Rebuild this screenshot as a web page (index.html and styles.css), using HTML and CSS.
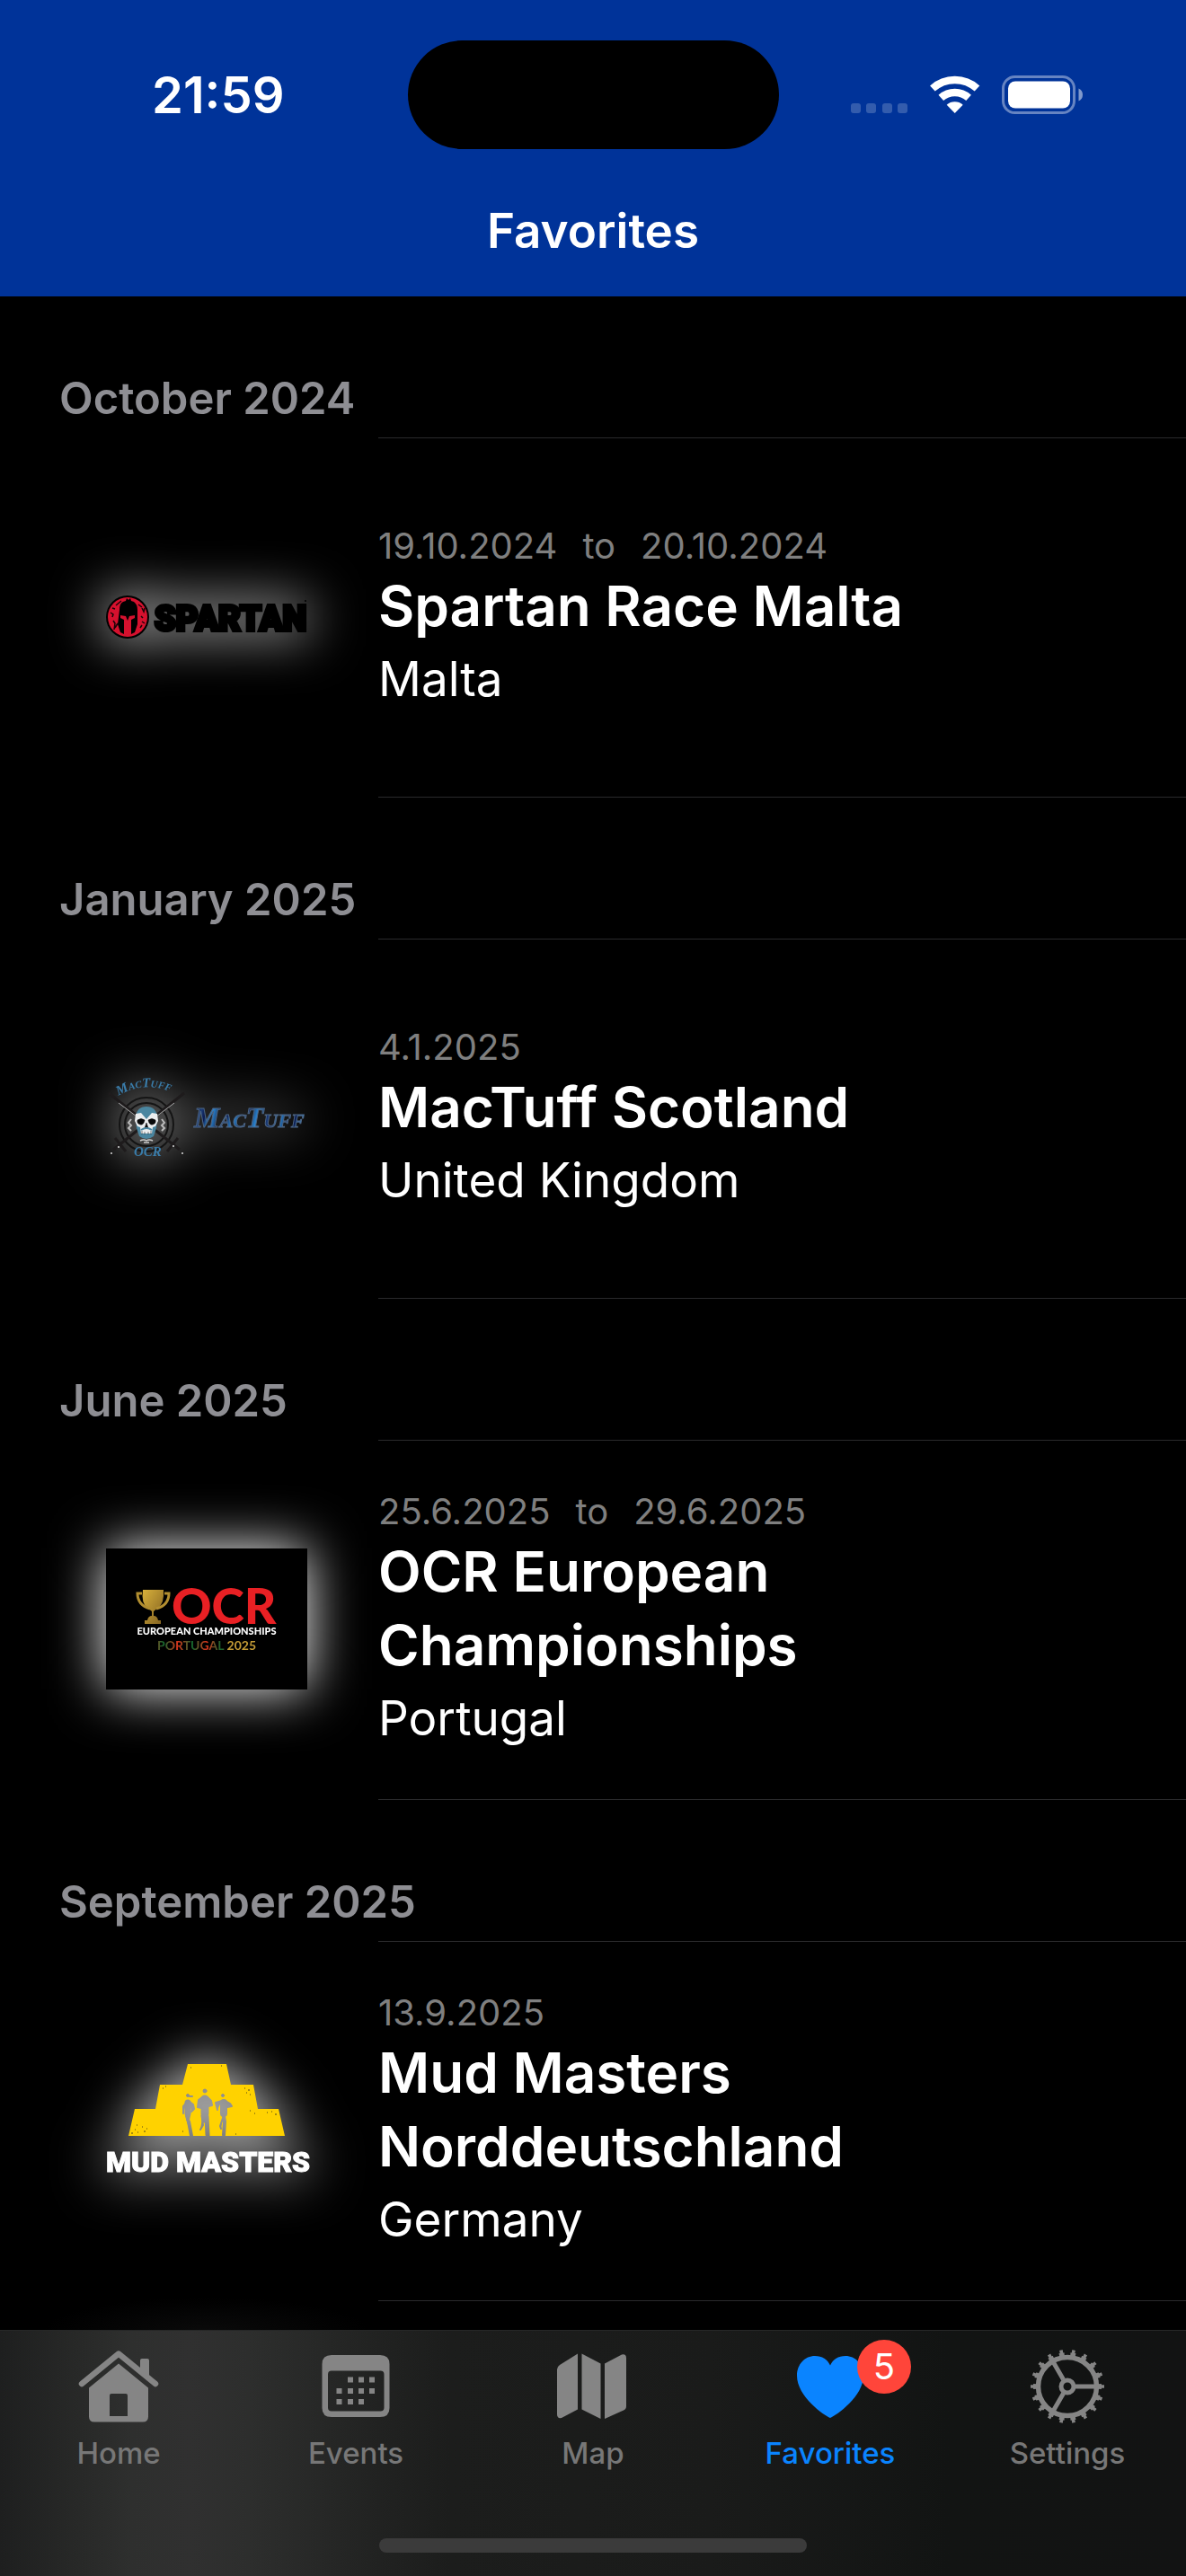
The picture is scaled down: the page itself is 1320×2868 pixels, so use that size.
FILE: index.html
```html
<!DOCTYPE html>
<html lang="en">
<head>
    <meta charset="UTF-8">
    <meta name="viewport" content="width=device-width, initial-scale=1.0">
    <title>Favorites</title>
    <link rel="stylesheet" href="styles.css">
</head>
<body>
    <header class="nav-bar">
        <div class="status-bar">
            <time class="clock">21:59</time>
            <div class="island"></div>
            <div class="indicators">
                <svg width="64" height="43" viewBox="0 0 64 43" fill="#fff" opacity="0.2">
                    <rect x="0" y="31" width="11" height="11" rx="3"/>
                    <rect x="17" y="31" width="11" height="11" rx="3"/>
                    <rect x="35" y="31" width="11" height="11" rx="3"/>
                    <rect x="52" y="31" width="11" height="11" rx="3"/>
                </svg>
                <svg width="56" height="43" viewBox="0 0 56 43" fill="none" stroke="#fff" stroke-width="8.4">
                    <path d="M2.9 14.5a37 37 0 0 1 49.6 0"/>
                    <path d="M12.3 24.9a23 23 0 0 1 30.8 0"/>
                    <path d="M27.7 42l-9-9.2a13.5 13.5 0 0 1 18 0z" fill="#fff" stroke="none"/>
                </svg>
                <svg width="90" height="43" viewBox="0 0 90 43" fill="#fff">
                    <rect x="1.5" y="1.5" width="79" height="40" rx="13" fill="none" stroke="#fff" stroke-width="3" opacity="0.4"/>
                    <rect x="7" y="6.5" width="69" height="30" rx="8"/>
                    <path d="M85.500 14.500q4.500 2 4.500 7t-4.500 7z" opacity="0.5"/>
                </svg>
            </div>
        </div>
        <h1>Favorites</h1>
    </header>

    <main class="events">
        <section>
            <h2>October 2024</h2>
            <article class="event">
                <div class="logo">
                    <svg width="224" height="48" viewBox="0 0 224 48">
                        <circle cx="24" cy="24" r="24"/>
                        <circle cx="24" cy="24" r="22" fill="#d5112e"/>
                        <path d="M15 16q0-7 4-9l3-1 1-3 2 2 2-2 1 3 3 1q4 3 4 9v16l-3 9-4 2V27l4-2v-3l-6 1-2 5-2-5-6-1v3l4 2v16l-4-2-3-9z"/>
                        <path d="M5 19l3 2-1 3M8 28l2 3-1 7M40 14l2 4 1-4M39 23l2 2M40 29l3 2M38 36l2-3M11 11l6-5M10 36l3-5M36 10l4 3M7 14l3 1" fill="none" stroke="#1a0408" stroke-width="1.5"/>
                        <text class="spartan" x="54" y="39">SPARTAN</text>
                        <circle cx="222" cy="6" r="1"/>
                    </svg>
                </div>
                <div class="info">
                    <p class="dates"><time>19.10.2024</time><span>to</span><time>20.10.2024</time></p>
                    <h3>Spartan Race Malta</h3>
                    <p class="country">Malta</p>
                </div>
            </article>
        </section>

        <section>
            <h2>January 2025</h2>
            <article class="event">
                <div class="logo">
                    <svg width="224" height="86" viewBox="0 0 224 86">
                        <defs>
                            <linearGradient id="tartan" x2="12" y2="3" gradientUnits="userSpaceOnUse" spreadMethod="reflect">
                                <stop offset="0" stop-color="#2c86d2"/>
                                <stop offset="0.4" stop-color="#1d5591"/>
                                <stop offset="0.6" stop-color="#0c1b50"/>
                                <stop offset="1" stop-color="#1b3c78"/>
                            </linearGradient>
                            <path id="arc" d="M14 18Q45 -1 80 17"/>
                        </defs>
                        <g fill="none" stroke="#141414" stroke-width="2">
                            <circle cx="45" cy="50" r="30"/>
                            <circle cx="45" cy="50" r="24"/>
                            <path d="M3 15L82 78M87 15L8 78M10 65l12 15M80 65L68 80" stroke="#1e1b1c" stroke-width="3"/>
                            <path d="M14 26l20 15M76 26L56 41" stroke="#aaa" stroke-width="1"/>
                        </g>
                        <circle cx="6" cy="82" r="1" fill="#ddd"/><circle cx="14" cy="75" r="1" fill="#ddd"/>
                        <circle cx="75" cy="74" r="1" fill="#ddd"/><circle cx="85" cy="82" r="1" fill="#ddd"/>
                        <path d="M28 44l-3 4 3 3-3 3 3 3M62 44l3 4-3 3 3 3-3 3" fill="none" stroke="#bbb" stroke-width="2"/>
                        <path d="M33 42q1-12 12-12t12 12l-1 12-3 9q-8 6-16 0l-3-9z" fill="#4a86a0"/>
                        <path d="M33 38l6-1 6 7 6-7 6 1 1 8-3 6-3 1-1 7H39l-1-7-3-1-3-6z" fill="#eceeef"/>
                        <path d="M35 45q4-3 8 0-1 6-5 5-4-1-3-5M55 45q-4-3-8 0 1 6 5 5 4-1 3-5M45 48l-2 6h4zM40 57v4M43 58v3M47 58v3M50 57v4" fill="#08090a" stroke="#08090a" stroke-width="0.5"/>
                        <path d="M39 56q6-4 12 0" fill="none" stroke="#4a86a0" stroke-width="2"/>
                        <path d="M38 68q4-2 7 0 3-2 7 0M42 70h6" fill="none" stroke="#ccc" stroke-width="1.5"/>
                        <text class="crest"><textPath href="#arc">MacTuff</textPath></text>
                        <text class="crest" x="31" y="85">OCR</text>
                        <text class="mactuff" x="98" y="53" fill="url(#tartan)">MacTuff</text>
                    </svg>
                </div>
                <div class="info">
                    <p class="dates"><time>4.1.2025</time></p>
                    <h3>MacTuff Scotland</h3>
                    <p class="country">United Kingdom</p>
                </div>
            </article>
        </section>

        <section>
            <h2>June 2025</h2>
            <article class="event">
                <div class="logo">
                    <svg width="224" height="157" viewBox="0 0 224 157">
                        <defs>
                            <linearGradient id="gold" x2="1" y2="1">
                                <stop offset="0" stop-color="#d9b13b"/>
                                <stop offset="1" stop-color="#806020"/>
                            </linearGradient>
                            <linearGradient id="flag" x1="0" x2="16" gradientUnits="userSpaceOnUse" spreadMethod="reflect">
                                <stop offset="0" stop-color="#12682e"/>
                                <stop offset="1" stop-color="#d9331b"/>
                            </linearGradient>
                        </defs>
                        <rect width="224" height="157"/>
                        <path d="M41 46h23q1 15-6 20l-5 4v5q4 0 5 5h3v4H43v-4h3q1-5 5-5v-5l-5-4q-7-5-5-20z" fill="url(#gold)"/>
                        <path d="M40 50h-5q0 13 14 17M65 50h5q0 13-14 17" fill="none" stroke="#b28e30" stroke-width="3"/>
                        <text class="ocr" x="73" y="84">OCR</text>
                        <text class="ocr-sub" x="112" y="96">EUROPEAN CHAMPIONSHIPS</text>
                        <text class="ocr-year" x="112" y="113"><tspan fill="url(#flag)">PORTUGAL</tspan> <tspan fill="#c29a35">2025</tspan></text>
                    </svg>
                </div>
                <div class="info">
                    <p class="dates"><time>25.6.2025</time><span>to</span><time>29.6.2025</time></p>
                    <h3>OCR European Championships</h3>
                    <p class="country">Portugal</p>
                </div>
            </article>
        </section>

        <section>
            <h2>September 2025</h2>
            <article class="event">
                <div class="logo">
                    <svg width="224" height="125" viewBox="0 0 224 125">
                        <mask id="runners">
                            <rect width="224" height="125" fill="#fff"/>
                            <g stroke="#000" stroke-linecap="round" stroke-linejoin="round">
                                <circle cx="91" cy="35" r="1.500"/>
                                <path d="M93 36l3 0" stroke-width="2"/>
                                <path d="M91 43v12" stroke-width="7"/>
                                <path d="M92 57l-1 5M92 64l3 16" stroke-width="4"/>
                                <path d="M90 42l-4 5v8M93 42l4 3 1 5-3 3M89 58l4 13" stroke-width="2"/>
                                <circle cx="110" cy="30" r="2"/>
                                <path d="M110 39v16" stroke-width="9"/>
                                <path d="M108 58l1 5M112 58l1 21" stroke-width="5"/>
                                <path d="M107 37l-4 3-1 8 4 1M113 37l4 4 1 5-4 1M107 60l1 8-3 5" stroke-width="2"/>
                                <circle cx="130" cy="35" r="1.500"/>
                                <path d="M131 43v12" stroke-width="8"/>
                                <path d="M131 58l1 6-1 15" stroke-width="4"/>
                                <path d="M129 41l-7 2 2 8M133 41l5 3 2 3-5 1M130 60l-3 9 1 3" stroke-width="2"/>
                            </g>
                        </mask>
                        <path d="M91 0h43l5 23h25l5 27h23l7 30H25l7-30h23l5-27h25z" fill="#ffd200" mask="url(#runners)"/>
                        <path d="M28 77h2M32 73h1M35 76h1M40 70h1M42 75h2M34 68h1M45 72h1M63 27h1M66 25h1M154 27h1M158 29h2M160 34h1M156 32h1M165 55h1M188 56h2M184 53h1M179 54h1M128 2h1M94 4h1M160 52h1M85 75h1M144 78h1" stroke="#8a7410" stroke-width="1.500"/>
                        <text class="mud" x="0" y="120">MUD MASTERS</text>
                    </svg>
                </div>
                <div class="info">
                    <p class="dates"><time>13.9.2025</time></p>
                    <h3>Mud Masters Norddeutschland</h3>
                    <p class="country">Germany</p>
                </div>
            </article>
        </section>
    </main>

    <footer class="tab-bar">
        <nav class="tabs">
            <a class="tab" href="#home">
                <svg class="tab-icon" viewBox="0 0 90 90">
                    <path d="M4 42L45 8.500L86 42" fill="none" stroke="currentColor" stroke-width="6.500" stroke-linecap="round" stroke-linejoin="round"/>
                    <path d="M69 30V16q0-2 2-2h6q2 0 2 2v22z"/>
                    <path fill-rule="evenodd" d="M45 19.500L78 46.500V78.500q0 6-6 6H18q-6 0-6-6V46.500zM37 53q-2 0-2 2v23h20V55q0-2-2-2z"/>
                </svg>
                <span>Home</span>
            </a>
            <a class="tab" href="#events">
                <svg class="tab-icon" viewBox="0 0 90 90">
                    <path fill-rule="evenodd" d="M18 10h54q10.500 0 10.500 10v49q0 10-10.500 10H18q-10.500 0-10.500-10V20q0-10 10.500-10zM18 27.500q-4 0-4 4v37q0 4 4 4h54.500q4 0 4-4v-37q0-4-4-4z"/>
                    <path d="M36 37.500h6M48 37.500h6M60 37.500h6M23.500 50h6M36 50h6M48 50h6M60 50h6M23.500 62h6M36 62h6M48 62h6" stroke="currentColor" stroke-width="6"/>
                </svg>
                <span>Events</span>
            </a>
            <a class="tab" href="#map">
                <svg class="tab-icon" viewBox="0 0 90 90">
                    <path d="M28 8.500v62L10 80q-5 1-5-4V26q0-3 3-5z"/>
                    <path d="M32.500 8.500l21 11v61.500l-21-10.500z"/>
                    <path d="M58 19.500L77 9.500q5-1 5 4V67q0 3-3 4.500L58 81z"/>
                </svg>
                <span>Map</span>
            </a>
            <a class="tab active" href="#favorites">
                <svg class="tab-icon" viewBox="0 0 90 90">
                    <path d="M45 80C38 77 8 56 8 33 8 20 17 11 28 11c8 0 14 4 17 10.500C48 15 54 11 62 11c11 0 20 9 20 22C82 56 52 77 45 80z"/>
                </svg>
                <b class="badge">5</b>
                <span>Favorites</span>
            </a>
            <a class="tab" href="#settings">
                <svg class="tab-icon" viewBox="0 0 90 90">
                    <g fill="none" stroke="currentColor">
                        <circle cx="45" cy="45" r="32.500" stroke-width="5.500"/>
                        <circle cx="45" cy="45" r="36" stroke-width="4" pathLength="180" stroke-dasharray="4.600 5.400" stroke-dashoffset="2.300"/>
                        <circle cx="45" cy="45" r="39" stroke-width="4" pathLength="180" stroke-dasharray="2.600 7.400" stroke-dashoffset="1.300"/>
                        <circle cx="45" cy="45" r="7" stroke-width="5"/>
                        <path d="M54 45h22M40.500 37.200l-11-19M40.500 52.800l-11 19" stroke-width="5"/>
                    </g>
                </svg>
                <span>Settings</span>
            </a>
        </nav>
        <div class="home-indicator"></div>
    </footer>
</body>
</html>
```
FILE: styles.css
```css
:root {
    --nav-color: #003399;
    --line-color: #2a2a2c;
    --muted: #8e8e93;
    --accent: #0a84ff;
}

* {
    box-sizing: border-box;
}

body {
    margin: 0;
    min-height: 100vh;
    display: flex;
    flex-direction: column;
    background: #000;
    color: #fff;
    font-family: Inter, "Liberation Sans", sans-serif;
}

h1, h2, h3, p {
    margin: 0;
    font-weight: 600;
}

svg {
    display: block;
}

/* top bar */
.nav-bar {
    background: var(--nav-color);
    padding: 45px 0 41px;
}

.status-bar {
    display: grid;
    grid-template-columns: 1fr 413px 1fr;
    align-items: center;
}

.clock {
    padding-left: 32px;
    text-align: center;
    font-size: 56px;
    font-weight: 600;
}

.island {
    height: 121px;
    border-radius: 61px;
    background: #000;
}

.indicators {
    display: flex;
    justify-content: center;
    gap: 24px;
    padding-right: 34px;
}

h1 {
    margin-top: 59px;
    text-align: center;
    font-size: 53px;
    line-height: 64px;
}

/* event list */
.events {
    flex: 1;
    background: radial-gradient(180px 36px at 230px 100%, #0a0a0a, transparent);
}

h2 {
    padding: 84px 66px 13px;
    color: var(--muted);
    font-size: 49px;
    line-height: 60px;
}

.event {
    display: flex;
    min-height: 401px;
}

.logo {
    display: flex;
    align-items: center;
    padding: 0 79px 2px 118px;
}

.logo svg {
    overflow: visible;
    filter: drop-shadow(0 0 30px #fff);
}

.info {
    flex: 1;
    display: flex;
    flex-direction: column;
    justify-content: center;
    padding: 0 120px 4px 0;
    border-top: 1px solid var(--line-color);
    border-bottom: 1px solid var(--line-color);
}

.dates {
    display: flex;
    gap: 28px;
    color: #7f7f7f;
    font-size: 40px;
    font-weight: 400;
    line-height: 52px;
}

h3 {
    font-size: 62px;
    line-height: 82px;
}

.country {
    margin-top: 7px;
    font-size: 53px;
    font-weight: 400;
    line-height: 66px;
}

/* logo lettering */
.spartan {
    font: 900 38px Roboto, sans-serif;
    stroke: #000;
    stroke-width: 4px;
}

.crest {
    font: bold italic 15px "Liberation Serif", serif;
    font-variant: small-caps;
    fill: #3a7dab;
}

.mactuff {
    font: bold italic 32px "Liberation Serif", serif;
    font-variant: small-caps;
    stroke: #4d6685;
    stroke-width: 1px;
}

.ocr {
    font: 900 55px Lato, sans-serif;
    fill: #e82024;
}

.ocr-sub {
    font: 900 11px Lato, sans-serif;
    fill: #fff;
    text-anchor: middle;
}

.ocr-year {
    font: 700 14px Lato, sans-serif;
    text-anchor: middle;
}

.mud {
    font: 900 32px Roboto, sans-serif;
    fill: #fff;
    stroke: #fff;
    stroke-width: 1px;
}

/* tab bar */
.tab-bar {
    padding: 17px 0 26px;
    border-top: 1px solid #262727;
    background: linear-gradient(90deg, #1e1f1f, #272827 6%, #2e2f2e 11%, #303030 16%, #2d2e2d 21%, #282928 26%, #212221 32%, #1c1d1c 38%, #1a1b1a 60%, #121413 80%, #121313);
}

.tabs {
    display: grid;
    grid-template-columns: repeat(5, 1fr);
}

.tab {
    position: relative;
    display: flex;
    flex-direction: column;
    align-items: center;
    gap: 9px;
    color: #858585;
    font-size: 33px;
    font-weight: 500;
    line-height: 40px;
    text-decoration: none;
}

.tab span {
    color: #777;
}

.tab.active,
.tab.active span {
    color: var(--accent);
}

.tab-icon {
    width: 90px;
    height: 90px;
    fill: currentColor;
}

.badge {
    position: absolute;
    top: -7px;
    left: calc(50% + 30px);
    width: 60px;
    height: 60px;
    border-radius: 50%;
    background: #ff453a;
    color: #fff;
    font-size: 40px;
    font-weight: 400;
    line-height: 60px;
    text-align: center;
}

.home-indicator {
    width: 36%;
    height: 16px;
    margin: 75px auto 0;
    border-radius: 8px;
    background: #3b3b3b;
}
```
